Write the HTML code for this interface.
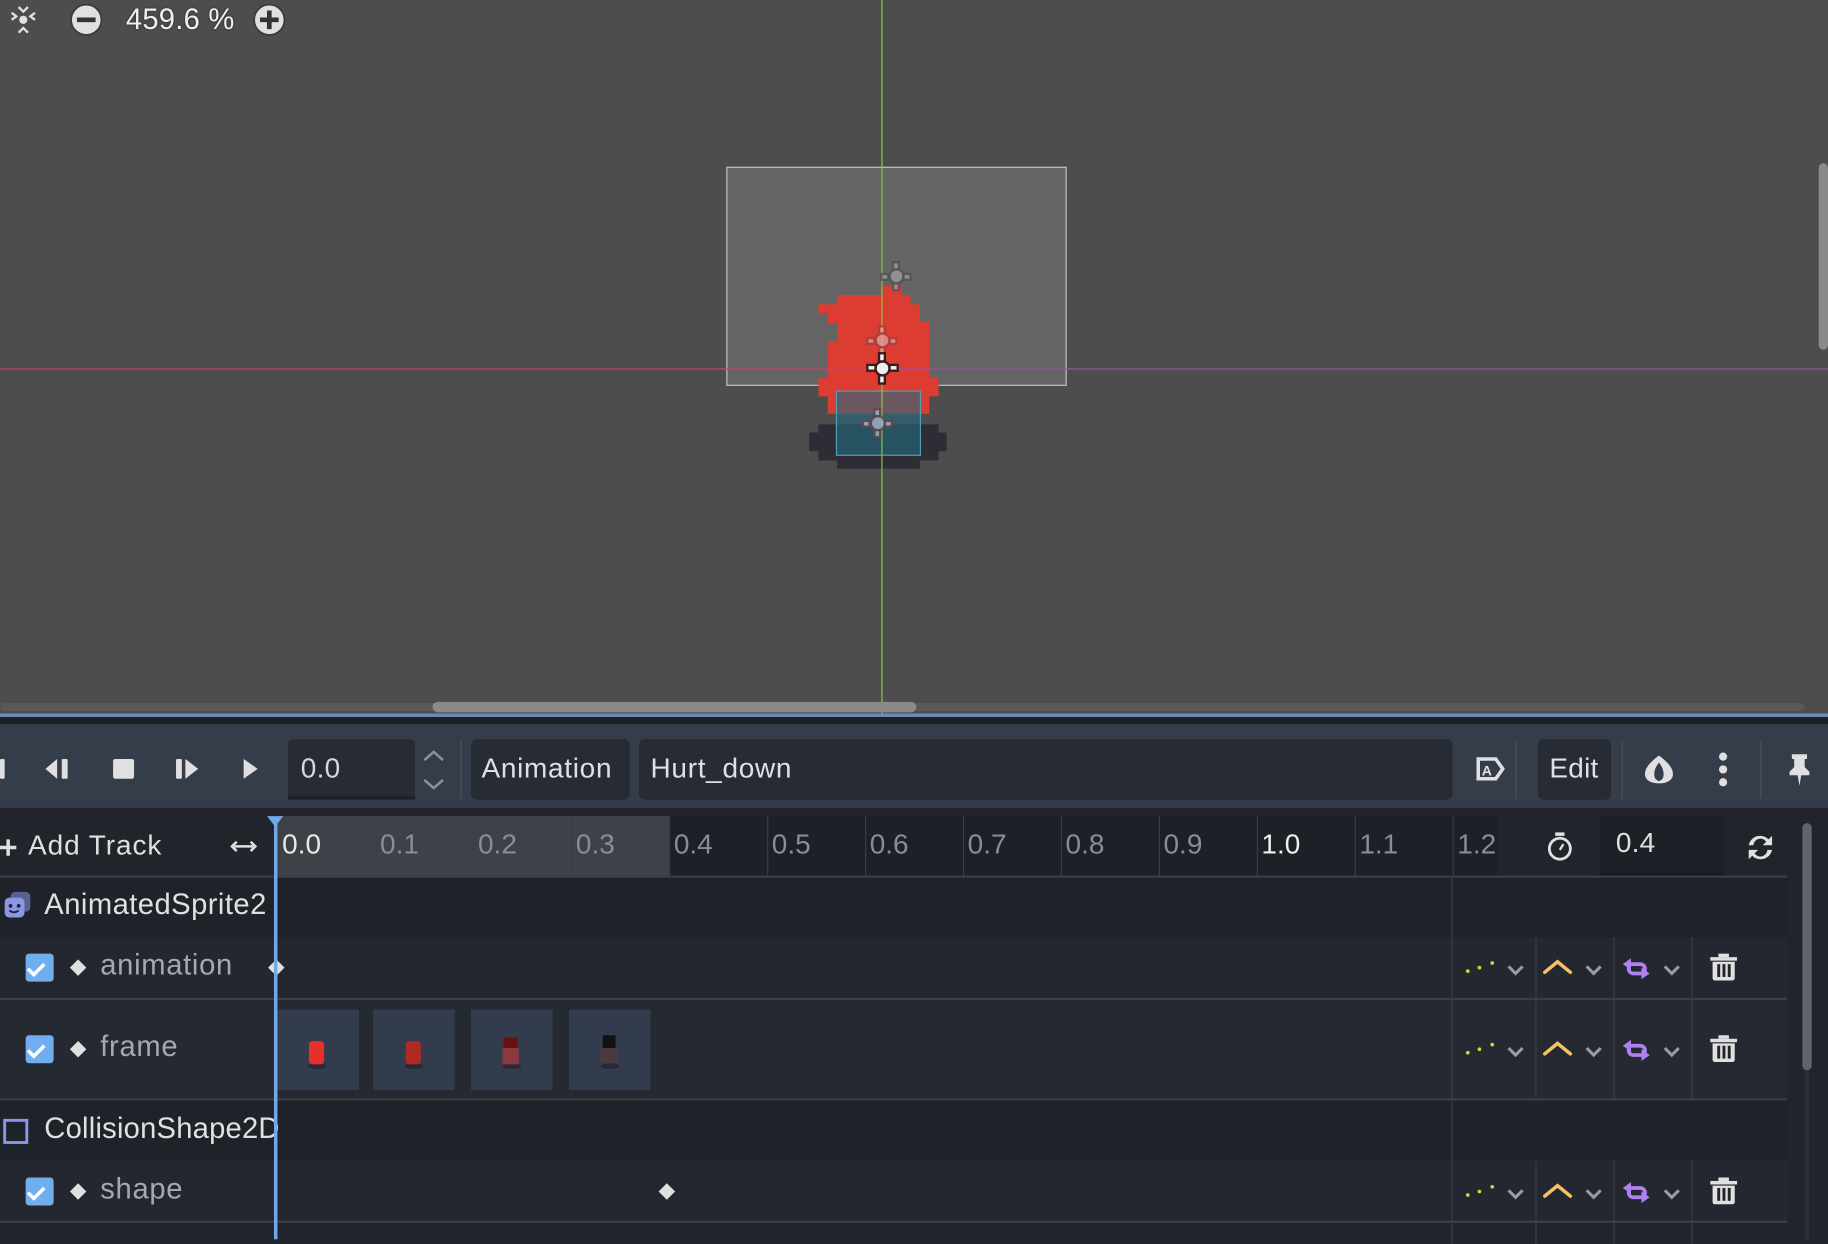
<!DOCTYPE html>
<html><head><meta charset="utf-8"><style>
html,body{margin:0;padding:0;width:1828px;height:1244px;overflow:hidden;background:#21252b}
#w{position:absolute;left:0;top:0;width:1568px;height:1067px;transform:scale(1.16582);transform-origin:0 0;font-family:"Liberation Sans","DejaVu Sans",sans-serif;color:#e0e0e0}
.a{position:absolute}
.t{position:absolute;font-size:24px;line-height:1;white-space:nowrap;letter-spacing:.2px}
.rl{position:absolute;top:700px;height:52px;width:1px;background:#3a3e46}
.lb{position:absolute;top:711px;font-size:24px;color:#8a8d94}
.cb{position:absolute;left:22px;width:24px;height:24px;border-radius:3px;background:#70aef0}
.dm{position:absolute;width:10px;height:10px;background:#e0e0e0;transform:rotate(45deg)}
.hl{position:absolute;left:0;width:1533px;height:2px;background:#3a3e46}
.th{position:absolute;top:866px;width:70px;height:69px;background:#323c4c}
</style></head><body><div id="w">
<div class="a" style="left:0;top:0;width:1568px;height:612px;background:#4d4d4d"></div>
<div class="a" style="left:623px;top:143px;width:290px;height:186px;background:#646464;border:1px solid #c4c4c4"></div>
<div class="a" style="left:702px;top:364px;width:103px;height:31px;background:#2e2d35"></div>
<div class="a" style="left:694px;top:371px;width:118px;height:16px;background:#2e2d35"></div>
<div class="a" style="left:718px;top:395px;width:71px;height:7px;background:#2e2d35"></div>
<div class="a" style="left:757px;top:245px;width:16px;height:9px;background:#dc3c32"></div>
<div class="a" style="left:718px;top:253px;width:63px;height:9px;background:#dc3c32"></div>
<div class="a" style="left:702px;top:261px;width:87px;height:8px;background:#dc3c32"></div>
<div class="a" style="left:710px;top:268px;width:79px;height:9px;background:#dc3c32"></div>
<div class="a" style="left:718px;top:276px;width:79px;height:18px;background:#dc3c32"></div>
<div class="a" style="left:710px;top:293px;width:87px;height:32px;background:#dc3c32"></div>
<div class="a" style="left:702px;top:324px;width:103px;height:16px;background:#dc3c32"></div>
<div class="a" style="left:710px;top:340px;width:87px;height:15px;background:#dc3c32"></div>
<div class="a" style="left:717px;top:335px;width:71px;height:54px;background:rgba(35,105,125,.62);border:1px solid #4aa3b8"></div>
<div class="a" style="left:756px;top:0;width:1px;height:612px;background:#8cc83c"></div>
<div class="a" style="left:0;top:316px;width:757px;height:1px;background:#c8455a"></div>
<div class="a" style="left:757px;top:316px;width:811px;height:1px;background:#a050a8"></div>
<svg class="a" style="left:0;top:0" width="1568" height="612">
<g fill="#999" stroke="#555" stroke-width="2" opacity=".85">
<circle cx="769" cy="237" r="6"/><rect x="766" y="225" width="5" height="6"/><rect x="766" y="243" width="5" height="6"/><rect x="756" y="235" width="6" height="5"/><rect x="775" y="235" width="6" height="5"/>
</g>
<g fill="#e0a0a0" stroke="#a04040" stroke-width="2" opacity=".75">
<circle cx="757" cy="292" r="6"/><rect x="754" y="280" width="5" height="6"/><rect x="754" y="298" width="5" height="6"/><rect x="744" y="290" width="6" height="5"/><rect x="763" y="290" width="6" height="5"/>
</g>
<g fill="#eee" stroke="#3a1a1a" stroke-width="2">
<circle cx="757" cy="316" r="6"/><rect x="754" y="303" width="5" height="7"/><rect x="754" y="322" width="5" height="7"/><rect x="744" y="313" width="7" height="5"/><rect x="763" y="313" width="7" height="5"/>
</g>
<g fill="#a0b8c0" stroke="#704050" stroke-width="2" opacity=".8">
<circle cx="753" cy="363" r="6"/><rect x="750" y="351" width="5" height="6"/><rect x="750" y="369" width="5" height="6"/><rect x="740" y="361" width="6" height="5"/><rect x="759" y="361" width="6" height="5"/>
</g>
<g fill="#e0e0e0"><circle cx="20" cy="17" r="3.5"/>
<path d="M10 11l4 3-4 3M30 11l-4 3 4 3M16 6l4 4 4-4M16 28l4-4 4 4" fill="none" stroke="#e0e0e0" stroke-width="2"/></g>
<circle cx="74" cy="17" r="13" fill="#e0e0e0" stroke="#3a3a3a" stroke-width="1.5"/><rect x="66" y="15" width="16" height="4" fill="#333"/>
<circle cx="231" cy="17" r="13" fill="#e0e0e0" stroke="#3a3a3a" stroke-width="1.5"/><rect x="223" y="15" width="16" height="4" fill="#333"/><rect x="229" y="9" width="4" height="16" fill="#333"/>
</svg>
<div class="t" style="left:108px;top:5px;font-size:25px;color:#f0f0f0;text-shadow:0 0 2px #222">459.6 %</div>
<div class="a" style="left:0;top:603px;width:1548px;height:7px;background:#585858;border-radius:4px"></div>
<div class="a" style="left:371px;top:602px;width:415px;height:9px;background:#8a8a8a;border-radius:5px"></div>
<div class="a" style="left:1560px;top:140px;width:8px;height:160px;background:#8a8a8a;border-radius:4px"></div>
<div class="a" style="left:0;top:612px;width:1568px;height:3px;background:#6a8cb0"></div>
<div class="a" style="left:0;top:615px;width:1568px;height:6px;background:#1d2026"></div>
<div class="a" style="left:0;top:621px;width:1568px;height:72px;background:#363d4a"></div>
<svg class="a" style="left:0;top:621px" width="1568" height="72" fill="#e0e0e0">
<rect x="0" y="30" width="4" height="17" rx="1"/>
<path d="M49 30v17l-10-8.5z"/><rect x="53" y="30" width="5" height="17" rx="1"/>
<rect x="97" y="30" width="18" height="17" rx="2"/>
<rect x="151" y="30" width="5" height="17" rx="1"/><path d="M159 30v17l11-8.5z"/>
<path d="M209 30v17l12-8.5z"/>
<path d="M364 31l8-7 8 7M364 48l8 7 8-7" fill="none" stroke="#8a909a" stroke-width="2.2"/>
<rect x="395" y="14" width="1" height="50" fill="#4a5160"/>
<path d="M1221 34l8 8 8-8" fill="none" stroke="#ccc" stroke-width="2.5"/>
<path d="M1268 30h15l6 8.5-6 8.5h-15z" fill="none" stroke="#e0e0e0" stroke-width="3"/><text x="1271" y="44" font-size="12" font-family="Liberation Sans" font-weight="bold">A</text>
<rect x="1300" y="14" width="1" height="50" fill="#4a5160"/>
<rect x="1391" y="14" width="1" height="50" fill="#4a5160"/>
<path d="M1423 27c-8 6-12 11-12 16 0 5 5 8 12 8s12-3 12-8c0-5-4-10-12-16zM1423 33c-3 4-4 7-4 10s1 5 4 6c3-1 4-3 4-6s-1-6-4-10z" fill-rule="evenodd"/>
<circle cx="1478" cy="28" r="3.5"/><circle cx="1478" cy="39" r="3.5"/><circle cx="1478" cy="50" r="3.5"/>
<rect x="1510" y="14" width="1" height="50" fill="#4a5160"/>
<path d="M1537 26h13v4h-2v7l4 4v3h-17v-3l4-4v-7h-2zM1542 44h3l-1.5 9z"/>
</svg>
<div class="a" style="left:247px;top:634px;width:109px;height:49px;background:#272b33;border-bottom:3px solid #1d2026;border-radius:4px 4px 0 0"></div>
<div class="t" style="left:258px;top:648px;color:#d8d8d8">0.0</div>
<div class="a" style="left:404px;top:634px;width:136px;height:52px;background:#272b33;border-radius:5px"></div>
<div class="t" style="left:413px;top:648px;letter-spacing:.6px">Animation</div>
<div class="a" style="left:548px;top:634px;width:698px;height:52px;background:#272b33;border-radius:5px"></div>
<div class="t" style="left:558px;top:648px;letter-spacing:.6px">Hurt_down</div>
<div class="a" style="left:1319px;top:634px;width:63px;height:52px;background:#272b33;border-radius:5px"></div>
<div class="t" style="left:1329px;top:648px">Edit</div>
<div class="a" style="left:0;top:693px;width:1568px;height:374px;background:#21252b"></div>
<div class="a" style="left:238px;top:700px;width:336px;height:52px;background:#3e4148"></div>
<div class="a" style="left:574px;top:700px;width:711px;height:52px;background:#1d2026"></div>
<div class="rl" style="left:322px"></div><div class="rl" style="left:406px"></div><div class="rl" style="left:490px"></div><div class="rl" style="left:574px"></div><div class="rl" style="left:658px"></div><div class="rl" style="left:742px"></div><div class="rl" style="left:826px"></div><div class="rl" style="left:910px"></div><div class="rl" style="left:994px"></div><div class="rl" style="left:1078px"></div><div class="rl" style="left:1162px"></div><div class="rl" style="left:1246px"></div>
<div class="lb" style="left:242px;color:#e8e8e8">0.0</div><div class="lb" style="left:326px">0.1</div><div class="lb" style="left:410px">0.2</div><div class="lb" style="left:494px">0.3</div><div class="lb" style="left:578px">0.4</div><div class="lb" style="left:662px">0.5</div><div class="lb" style="left:746px">0.6</div><div class="lb" style="left:830px">0.7</div><div class="lb" style="left:914px">0.8</div><div class="lb" style="left:998px">0.9</div><div class="lb" style="left:1082px;color:#f0f0f0">1.0</div><div class="lb" style="left:1166px">1.1</div><div class="lb" style="left:1250px">1.2</div>
<div class="a" style="left:1372px;top:700px;width:106px;height:49px;background:#1d2026;border-bottom:2px solid #181a1f"></div>
<div class="t" style="left:1386px;top:712px">0.4</div>
<div class="t" style="left:24px;top:714px;letter-spacing:.8px">Add Track</div>
<div class="hl" style="top:751px"></div>
<div class="a" style="left:0;top:753px;width:1533px;height:51px;background:#1f2229"></div>
<div class="a" style="left:0;top:804px;width:1533px;height:52px;background:#23272f"></div>
<div class="hl" style="top:856px"></div>
<div class="a" style="left:0;top:858px;width:1533px;height:84px;background:#252932"></div>
<div class="hl" style="top:942px"></div>
<div class="a" style="left:0;top:944px;width:1533px;height:51px;background:#1f2229"></div>
<div class="a" style="left:0;top:995px;width:1533px;height:52px;background:#23272f"></div>
<div class="hl" style="top:1047px"></div>
<div class="a" style="left:1245px;top:752px;width:1px;height:315px;background:#3a3e46"></div>
<div class="a" style="left:1317px;top:804px;width:1px;height:140px;background:#3a3e46"></div>
<div class="a" style="left:1384px;top:804px;width:1px;height:140px;background:#3a3e46"></div>
<div class="a" style="left:1451px;top:804px;width:1px;height:140px;background:#3a3e46"></div>
<div class="a" style="left:1317px;top:996px;width:1px;height:71px;background:#3a3e46"></div>
<div class="a" style="left:1384px;top:996px;width:1px;height:71px;background:#3a3e46"></div>
<div class="a" style="left:1451px;top:996px;width:1px;height:71px;background:#3a3e46"></div>
<div class="t" style="left:38px;top:764px;font-size:25px;letter-spacing:.4px">AnimatedSprite2</div>
<div class="t" style="left:38px;top:956px;font-size:25px;letter-spacing:.2px">CollisionShape2D</div>
<div class="t" style="left:86px;top:816px;color:#a8a8ac;font-size:25px;letter-spacing:.6px">animation</div>
<div class="t" style="left:86px;top:886px;color:#a8a8ac;font-size:25px;letter-spacing:.6px">frame</div>
<div class="t" style="left:86px;top:1008px;color:#a8a8ac;font-size:25px;letter-spacing:.6px">shape</div>
<div class="cb" style="top:818px"></div><div class="cb" style="top:888px"></div><div class="cb" style="top:1010px"></div>
<div class="dm" style="left:62px;top:825px"></div><div class="dm" style="left:62px;top:895px"></div><div class="dm" style="left:62px;top:1017px"></div>
<div class="dm" style="left:232px;top:825px"></div><div class="dm" style="left:567px;top:1017px"></div>
<div class="th" style="left:238px"></div><div class="th" style="left:320px"></div><div class="th" style="left:404px"></div><div class="th" style="left:488px"></div>
<div class="a" style="left:264px;top:912px;width:16px;height:5px;border-radius:50%;background:#262a34"></div>
<div class="a" style="left:265px;top:893px;width:13px;height:20px;background:#e8302a;border-radius:3px"></div>
<div class="a" style="left:347px;top:912px;width:16px;height:5px;border-radius:50%;background:#262a34"></div>
<div class="a" style="left:348px;top:893px;width:13px;height:20px;background:#b02a22;border-radius:3px"></div>
<div class="a" style="left:431px;top:912px;width:16px;height:5px;border-radius:50%;background:#262a34"></div>
<div class="a" style="left:432px;top:890px;width:12px;height:10px;background:#6a1010"></div>
<div class="a" style="left:431px;top:899px;width:14px;height:14px;background:#8a3a40"></div>
<div class="a" style="left:515px;top:912px;width:16px;height:5px;border-radius:50%;background:#262a34"></div>
<div class="a" style="left:517px;top:888px;width:11px;height:11px;background:#111"></div>
<div class="a" style="left:515px;top:899px;width:15px;height:13px;background:#4a3a40"></div>
<div class="a" style="left:235px;top:703px;width:3px;height:360px;background:#70a8e8"></div>
<svg class="a" style="left:0;top:693px" width="1568" height="374">
<path d="M229 7h14l-7 9z" fill="#70a8e8"/>
<path d="M0 34h14M7 27v14" stroke="#e0e0e0" stroke-width="3"/>
<path d="M201 33h16M203 29l-4 4 4 4M215 29l4 4-4 4" fill="none" stroke="#e0e0e0" stroke-width="2.2"/>
<circle cx="1338" cy="35" r="9" fill="none" stroke="#e0e0e0" stroke-width="2.4"/><rect x="1334" y="21" width="8" height="3" fill="#e0e0e0"/><path d="M1338 36l3-5" stroke="#e0e0e0" stroke-width="2"/>
<path d="M1500 32a10 10 0 0 1 17-5l3-3v8h-8l3-3a6 6 0 0 0-11 3zM1520 36a10 10 0 0 1-17 5l-3 3v-8h8l-3 3a6 6 0 0 0 11-3z" fill="#e0e0e0"/>
<rect x="9" y="72" width="17" height="17" rx="4" fill="#5a6090"/>
<rect x="4" y="77" width="17" height="17" rx="4" fill="#8a96e8"/>
<circle cx="9" cy="84" r="1.6" fill="#21252b"/><circle cx="16" cy="84" r="1.6" fill="#21252b"/><path d="M8 88q4 3 8 0" stroke="#21252b" stroke-width="1.5" fill="none"/>
<rect x="4" y="268" width="19" height="19" fill="none" stroke="#8a96e8" stroke-width="2.5"/>
<path d="M24 138l5 5 9-9M24 208l5 5 9-9M24 330l5 5 9-9" stroke="#fff" stroke-width="3" fill="none"/>
<rect x="1546" y="13" width="8" height="212" rx="4" fill="#5f6570"/>
<rect x="1548" y="225" width="4" height="145" fill="#2a2e36"/>
<g id="ic">
<circle cx="1259" cy="140" r="1.6" fill="#b4e040"/><circle cx="1269" cy="137" r="1.6" fill="#b4e040"/><circle cx="1280" cy="133" r="1.6" fill="#b4e040"/>
<path d="M1294 136l6 6 6-6M1361 136l6 6 6-6M1428 136l6 6 6-6" stroke="#9a9ca2" stroke-width="2.6" fill="none"/>
<path d="M1325 141l11-9 11 9" stroke="#f8c060" stroke-width="3" fill="none" stroke-linecap="round"/>
<path d="M1399 134h8a4 4 0 0 1 4 4v1M1397 137v1a4 4 0 0 0 4 4h7" stroke="#b080f0" stroke-width="3.2" fill="none" stroke-linecap="round"/>
<path d="M1392 134l7-5v10zM1415 142l-7-5v10z" fill="#b080f0"/>
<rect x="1467" y="128" width="23" height="3" fill="#e0e0e0"/><rect x="1474" y="125" width="9" height="3" fill="#e0e0e0"/>
<path d="M1469 132h19v14a2 2 0 0 1-2 2h-15a2 2 0 0 1-2-2z" fill="#e0e0e0"/>
<rect x="1473" y="134" width="2.5" height="11" fill="#21252b"/><rect x="1477.5" y="134" width="2.5" height="11" fill="#21252b"/><rect x="1482" y="134" width="2.5" height="11" fill="#21252b"/>
</g>
<use href="#ic" y="70"/>
<use href="#ic" y="192"/>
</svg>
</div></body></html>
